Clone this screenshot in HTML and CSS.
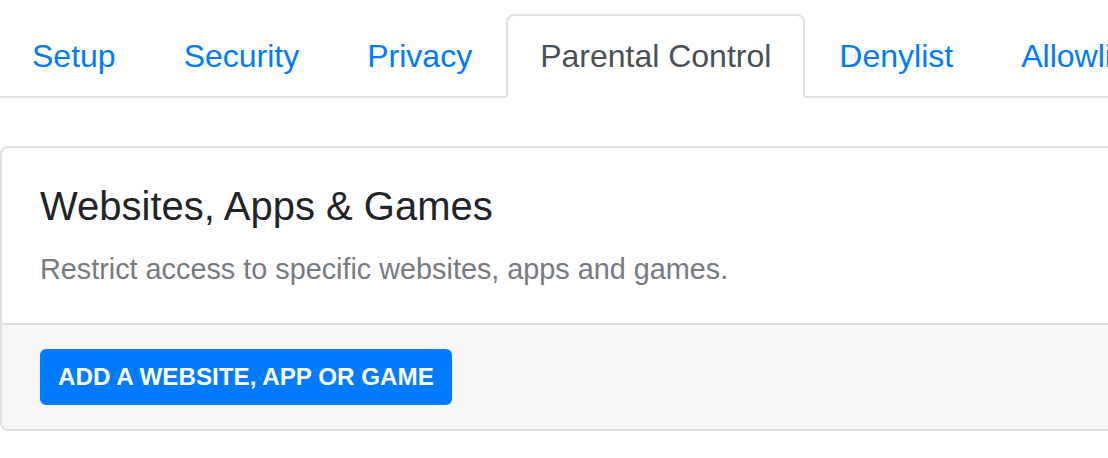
FILE: index.html
```html
<!DOCTYPE html>
<html lang="en">
<head>
<meta charset="UTF-8" />
<meta name="viewport" content="width=device-width, initial-scale=1" />
<title>Parental Control</title>
<link rel="stylesheet" href="styles.css">
</head>
<body>
<div class="page">
  <ul class="nav-tabs">
    <li><a class="nav-link" href="#">Setup</a></li>
    <li><a class="nav-link" href="#">Security</a></li>
    <li><a class="nav-link" href="#">Privacy</a></li>
    <li><a class="nav-link active" href="#">Parental Control</a></li>
    <li><a class="nav-link" href="#">Denylist</a></li>
    <li><a class="nav-link" href="#">Allowlist</a></li>
    <li><a class="nav-link" href="#">Settings</a></li>
  </ul>

  <div class="card">
    <div class="card-body">
      <h4 class="card-title">Websites, Apps &amp; Games</h4>
      <p class="card-text">Restrict access to specific websites, apps and games.</p>
    </div>
    <div class="card-footer">
      <button type="button" class="btn-add">ADD A WEBSITE, APP OR GAME</button>
    </div>
  </div>
</div>
</body>
</html>
```

FILE: styles.css
```css
/* base */
html, body {
  margin: 0;
  padding: 0;
  overflow: hidden;
}
body {
  background: #fff;
  font-family: "Liberation Sans", Arial, sans-serif;
  color: #212529;
}
.page {
  width: 1240px;
  padding-top: 14px;
}

/* tabs */
.nav-tabs {
  display: flex;
  flex-wrap: nowrap;
  list-style: none;
  margin: 0 0 0 -2px;
  padding: 0;
  border-bottom: 2px solid #dee2e6;
}
.nav-tabs li {
  margin-bottom: -2px;
  flex-shrink: 0;
}
.nav-link {
  display: block;
  padding: 16px 32px;
  font-size: 32px;
  line-height: 48px;
  color: #007bff;
  text-decoration: none;
  border: 2px solid transparent;
  border-radius: 8px 8px 0 0;
}
.nav-link.active {
  color: #495057;
  background: #fff;
  border-color: #dee2e6 #dee2e6 #fff;
}

/* card */
.card {
  margin-top: 48px;
  border: 2px solid #dfdfdf;
  border-radius: 8px;
  overflow: hidden;
}
.card-body {
  padding: 34px 38px 32px;
}
.card-title {
  margin: 0 0 18px;
  font-size: 40px;
  line-height: 48px;
  font-weight: 400;
  color: #212529;
}
.card-text {
  margin: 0;
  font-size: 28.8px;
  line-height: 43px;
  color: #777b80;
}
.card-footer {
  padding: 24px 38px;
  background: #f7f7f7;
  border-top: 2px solid #dfdfdf;
}
.btn-add {
  display: block;
  padding: 8px 16px;
  font-family: inherit;
  font-size: 24.2px;
  line-height: 36px;
  font-weight: 700;
  color: #fff;
  background: #007bff;
  border: 2px solid #007bff;
  border-radius: 6px;
  cursor: pointer;
}
```
